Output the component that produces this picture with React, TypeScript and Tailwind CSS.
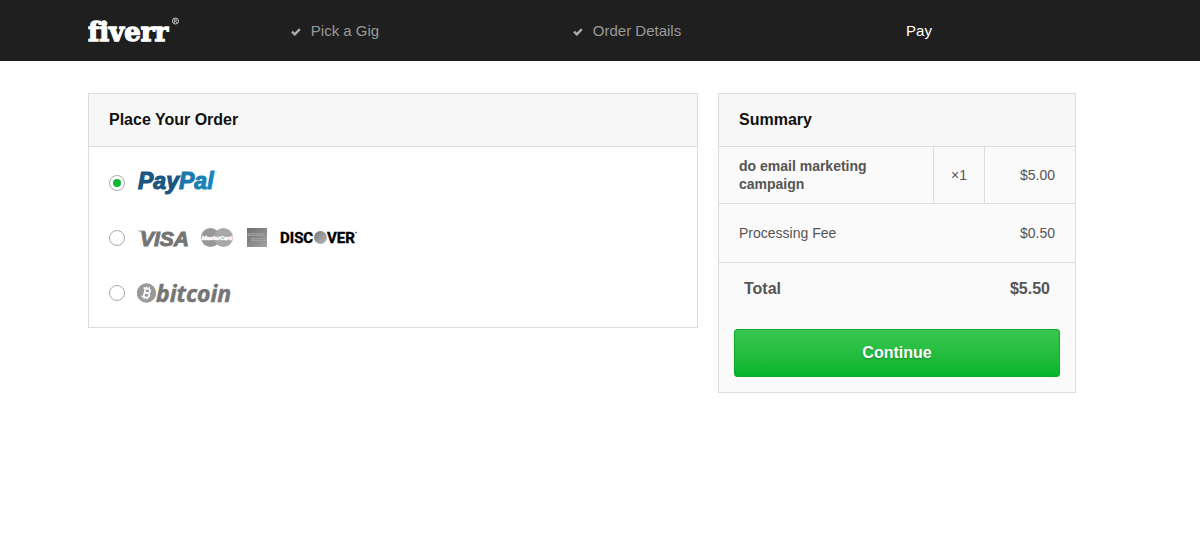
import React, { useState } from "react";

const steps = [
  { label: "Pick a Gig", done: true },
  { label: "Order Details", done: true },
  { label: "Pay", done: false },
];

const FiverrLogo = () => (
  <svg width="94" height="42" viewBox="0 0 94 42" role="img" aria-label="fiverr" className="block">
    <text
      x="0"
      y="31"
      fill="#fff"
      stroke="#fff"
      strokeWidth="1.3"
      fontSize="26"
      fontWeight="700"
      fontFamily="'DejaVu Serif', serif"
      className="[font-variant-ligatures:none]"
    >
      fiverr
    </text>
    <circle cx="87.5" cy="11" r="3" fill="none" stroke="#ddd" strokeWidth="0.9" />
    <path d="M86.500 12.800V9.400h1.200a.9.9 0 0 1 0 1.800h-1.200M87.600 11.200l1.100 1.600" fill="none" stroke="#ddd" strokeWidth="0.7" />
  </svg>
);

const CheckIcon = () => (
  <svg width="10" height="8" viewBox="0 0 10 8" aria-hidden="true" className="mt-1">
    <path d="M1 3.700l2.800 2.700L8.800 1.200" fill="none" stroke="#aaa" strokeWidth="2.400" />
  </svg>
);

const PayPalLogo = () => (
  <svg width="80" height="38" viewBox="0 0 80 38" role="img" aria-label="PayPal">
    <defs>
      <linearGradient id="pal" x1="0" x2="1" y1="0" y2="0">
        <stop offset="0" stopColor="#1b75a8" />
        <stop offset="1" stopColor="#1a86bd" />
      </linearGradient>
    </defs>
    <g
      strokeWidth="1.1"
      fontSize="23"
      fontWeight="700"
      fontStyle="italic"
      fontFamily="'Liberation Sans', Arial, sans-serif"
    >
      <text x="1" y="25" fill="#1a567f" stroke="#1a567f">Pay</text>
      <text x="42" y="25" fill="url(#pal)" stroke="url(#pal)">Pal</text>
    </g>
  </svg>
);

const CardLogos = () => (
  <svg width="224" height="28" viewBox="0 -2 224 28" role="img" aria-label="Visa, MasterCard, American Express, Discover">
    <defs>
      <linearGradient id="amex" x1="0" x2="1" y1="0" y2="1">
        <stop offset="0" stopColor="#6f6f6f" />
        <stop offset="1" stopColor="#a2a2a2" />
      </linearGradient>
      <linearGradient id="disc" x1="0" x2="1" y1="0" y2="1">
        <stop offset="0" stopColor="#777" />
        <stop offset="1" stopColor="#bbb" />
      </linearGradient>
    </defs>

    {/* Visa */}
    <path d="M1 4.500h6.500l3 7C8.500 8 5 5.700 1 5z" fill="#999" />
    <text
      x="3"
      y="20"
      fill="#747474"
      stroke="#747474"
      strokeWidth="1"
      fontSize="21"
      fontWeight="700"
      fontStyle="italic"
      fontFamily="'Liberation Sans', Arial, sans-serif"
    >
      VISA
    </text>

    {/* MasterCard */}
    <circle cx="73.500" cy="11.500" r="9.500" fill="#989898" />
    <circle cx="86.500" cy="11.500" r="9.500" fill="#a8a8a8" />
    <text
      x="80"
      y="14"
      textAnchor="middle"
      fill="#fff"
      stroke="#fff"
      strokeWidth="0.4"
      fontSize="6"
      fontWeight="700"
      fontStyle="italic"
      fontFamily="Roboto, sans-serif"
    >
      MasterCard
    </text>

    {/* American Express */}
    <rect x="110" y="2" width="20" height="19" fill="url(#amex)" />
    <path d="M110.500 8.500h16M114 13.500h15.500" stroke="#a8a8a8" strokeWidth="3" strokeDasharray="1.500 .6" />
    <path d="M110.500 8.500h16M114 13.500h15.500" stroke="#868686" strokeWidth="1" strokeDasharray="1 1.200" />

    {/* Discover */}
    <g fill="#000" stroke="#000" strokeWidth="0.4" fontSize="15" fontWeight="700" fontFamily="Roboto, sans-serif">
      <text x="143" y="17">DISC</text>
      <text x="190" y="17">VER</text>
    </g>
    <circle cx="183.500" cy="11.500" r="6.500" fill="url(#disc)" />
    <circle cx="219" cy="6.500" r="0.8" fill="#333" />
  </svg>
);

const BitcoinLogo = () => (
  <svg width="98" height="36" viewBox="0 0 98 36" role="img" aria-label="bitcoin">
    <circle cx="9.500" cy="18" r="9.700" fill="#999" />
    <g transform="rotate(13 9.500 18)" fill="none" stroke="#fff" strokeWidth="1.700">
      <path d="M5.500 13.700h5a2 2 0 0 1 0 4.200H7.300M10.500 17.900a2.200 2.200 0 0 1 0 4.500h-5M7.500 13.500v9" />
      <path d="M8.500 11.500v2.200M11 11.500v2.200M8.500 22.500v2M11 22.500v2" strokeWidth="1.200" />
    </g>
    <text
      x="19"
      y="27"
      fill="#757575"
      stroke="#757575"
      strokeWidth="0.5"
      fontSize="23"
      fontWeight="700"
      fontStyle="italic"
      fontFamily="'Open Sans', sans-serif"
    >
      bitcoin
    </text>
  </svg>
);

const methods = [
  { id: "paypal", logo: <PayPalLogo /> },
  { id: "card", logo: <CardLogos /> },
  { id: "bitcoin", logo: <BitcoinLogo /> },
];

export default function App() {
  const [method, setMethod] = useState("paypal");

  return (
    <div className="font-['Liberation_Sans',Arial,sans-serif] text-sm text-[#555]">
      <header className="bg-[#1f1f1f]">
        <div className="flex h-[61px] max-w-[1076px] items-center pl-6 lg:pl-[88px]">
          <a href="#" className="w-[101px] shrink-0">
            <FiverrLogo />
          </a>
          <ol className="mr-[11px] grid flex-1 grid-cols-3 text-[15px]">
            {steps.map((step) => (
              <li
                key={step.label}
                className={`flex items-center justify-center gap-[10px] ${step.done ? "text-[#999]" : "text-white"}`}
              >
                {step.done && <CheckIcon />}
                {step.label}
              </li>
            ))}
          </ol>
        </div>
      </header>

      <main className="flex max-w-[1076px] flex-col gap-5 px-6 pt-8 md:flex-row md:items-start lg:pr-0 lg:pl-[88px]">
        <section className="flex-1 border border-[#ddd]">
          <h2 className="border-b border-[#ddd] bg-[#f7f7f7] px-5 py-[14px] text-base font-bold text-[#111]">
            Place Your Order
          </h2>
          <div className="pt-2 pb-[7px]">
            {methods.map((m) => (
              <label key={m.id} className="flex h-[55px] cursor-pointer items-center gap-3 px-5">
                <input
                  type="radio"
                  name="method"
                  aria-label={m.id}
                  checked={method === m.id}
                  onChange={() => setMethod(m.id)}
                  className="grid size-4 shrink-0 appearance-none place-content-center rounded-full border border-[#aaa] bg-white before:size-2 before:rounded-full checked:before:bg-[#0dba35]"
                />
                {m.logo}
              </label>
            ))}
          </div>
        </section>

        <section className="border border-[#ddd] bg-[#fafafa] md:w-[358px]">
          <h2 className="border-b border-[#ddd] bg-[#f7f7f7] px-5 py-[14px] text-base font-bold text-[#111]">
            Summary
          </h2>
          <table className="w-full border-separate border-spacing-0">
            <tbody>
              <tr className="h-[57px]">
                <th scope="row" className="border-b border-[#ddd] pr-10 pl-5 text-left leading-[18px] font-bold">
                  do email marketing campaign
                </th>
                <td className="w-[51px] border-b border-l border-[#ddd] text-center">×1</td>
                <td className="w-[91px] border-b border-l border-[#ddd] pr-5 text-right">$5.00</td>
              </tr>
              <tr className="h-[59px]">
                <th scope="row" colSpan={2} className="border-b border-[#ddd] pl-5 text-left font-normal">
                  Processing Fee
                </th>
                <td className="border-b border-[#ddd] pr-5 text-right">$0.50</td>
              </tr>
            </tbody>
            <tfoot>
              <tr className="h-[51px] text-base font-bold">
                <th scope="row" colSpan={2} className="pl-[25px] text-left">
                  Total
                </th>
                <td className="pr-[25px] text-right">$5.50</td>
              </tr>
            </tfoot>
          </table>
          <div className="p-[15px]">
            <button
              type="button"
              className="h-12 w-full cursor-pointer rounded-[3px] border border-[#0aad2b] bg-linear-to-b from-[#37c750] to-[#03b42a] text-base font-bold text-white [text-shadow:0_1px_2px_rgba(0,0,0,0.3)]"
            >
              Continue
            </button>
          </div>
        </section>
      </main>
    </div>
  );
}
